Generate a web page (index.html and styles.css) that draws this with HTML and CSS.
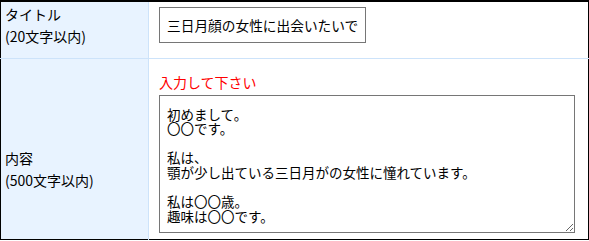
FILE: index.html
```html
<!DOCTYPE html>
<html lang="ja">
<head>
    <meta charset="UTF-8">
    <title>投稿フォーム</title>
    <link rel="stylesheet" href="styles.css">
</head>
<body>
<table class="post-form">
    <tbody>
        <tr class="row-title">
            <th>タイトル<br>(20文字以内)</th>
            <td><input class="title-input" type="text" value="三日月顔の女性に出会いたいです"></td>
        </tr>
        <tr class="row-body">
            <th>内容<br>(500文字以内)</th>
            <td>
                <div class="error">入力して下さい</div>
                <textarea class="body-input">初めまして。
〇〇です。

私は、
顎が少し出ている三日月がの女性に憧れています。

私は〇〇歳。
趣味は〇〇です。</textarea>
            </td>
        </tr>
    </tbody>
</table>
</body>
</html>
```

FILE: styles.css
```css
body { margin: 0; background: #fff; font-family: "Noto Sans CJK JP", "Noto Sans", sans-serif; color: #000; }
table.post-form {
    width: 589px; border-collapse: collapse;
    border: 1px solid #000; border-top-width: 2px; box-sizing: border-box;
}
.post-form th {
    width: 142px; background: #e8f3ff; border-right: 1px solid #cde3fa;
    text-align: left; font-weight: normal; font-size: 14px; line-height: 22px;
    padding-left: 4px; vertical-align: top;
}
.post-form td { padding-left: 10px; vertical-align: top; }
.post-form .row-title th, .post-form .row-title td { border-bottom: 1px solid #cde3fa; height: 57px; box-sizing: border-box; }
.post-form .row-title th { padding-top: 1px; padding-bottom: 0; }
.post-form .row-title td { padding-top: 5px; padding-bottom: 0; }
.post-form .row-body th { padding-top: 88px; padding-bottom: 0; }
.post-form .row-body td { padding-top: 13px; padding-bottom: 6px; }
.title-input {
    width: 207px; height: 36px; box-sizing: border-box; margin: 0;
    border: 1px solid #767676; padding: 0 7px;
    font-family: inherit; font-size: 13.7px; color: #000;
}
.error { color: #f00; font-size: 14px; line-height: 20px; margin-bottom: 3px; }
.body-input {
    display: block; width: 416px; height: 138px; box-sizing: border-box; margin: 0;
    border: 1px solid #767676; padding: 11px 7px 7px;
    font-family: inherit; font-size: 13.5px; line-height: 14.6px; color: #000;
}
```
